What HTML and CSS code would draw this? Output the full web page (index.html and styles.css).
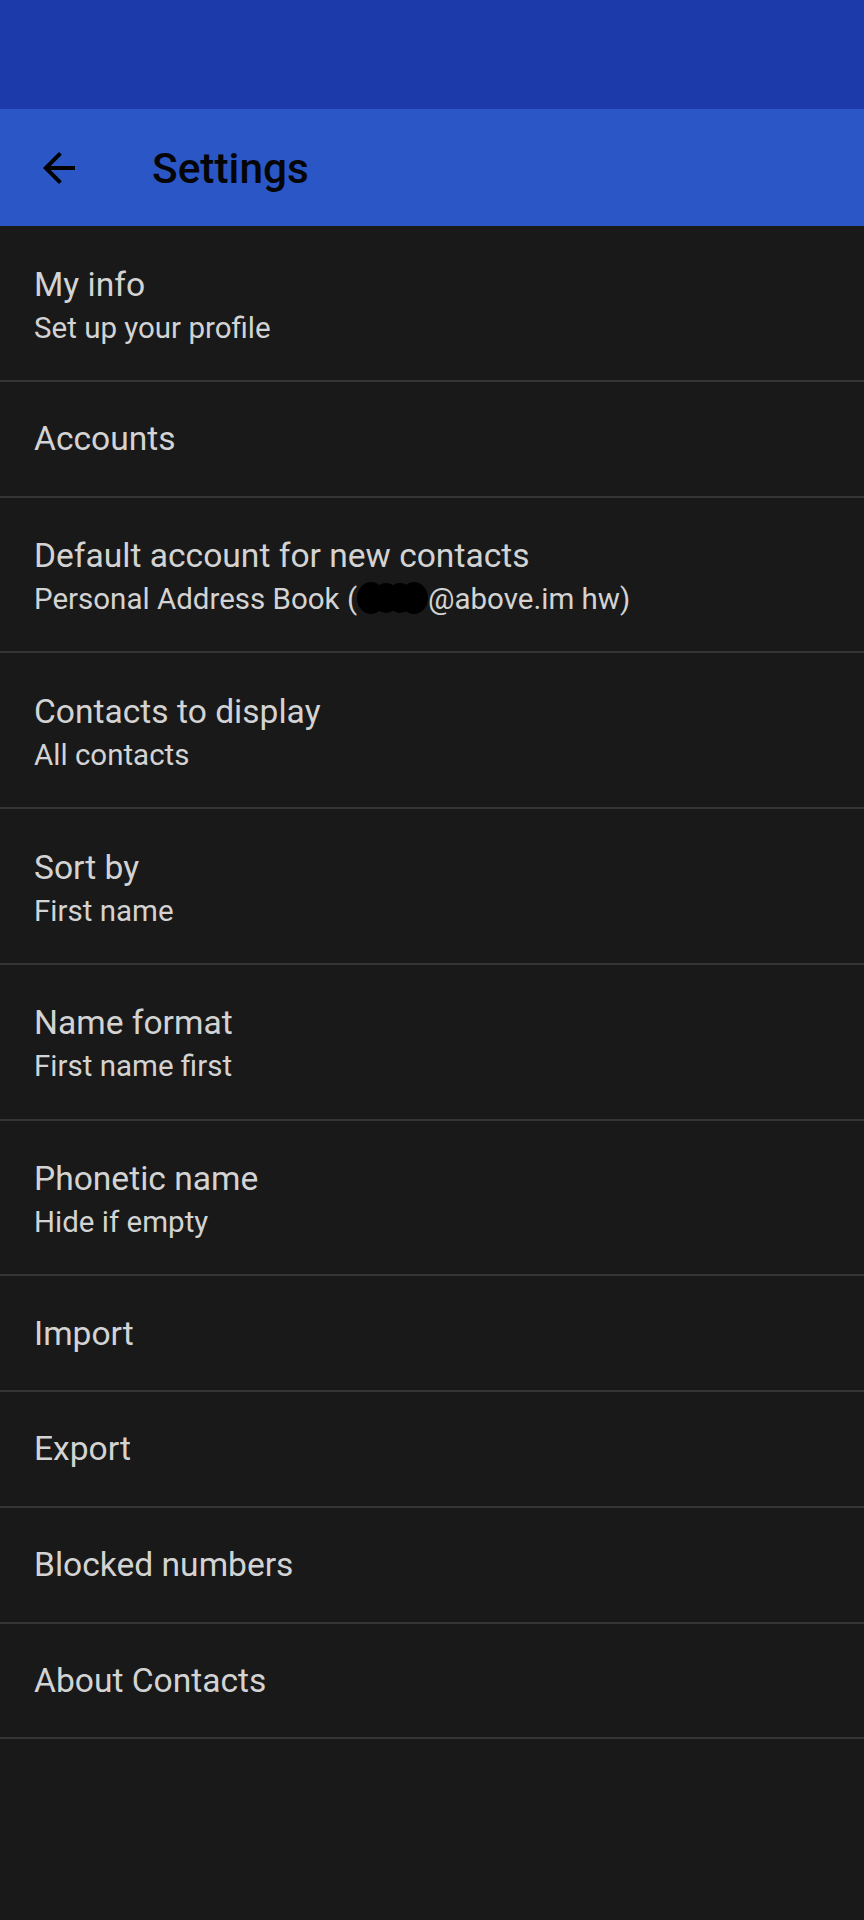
FILE: index.html
```html
<!DOCTYPE html>
<html>
<head>
<meta charset="utf-8">
<link rel="stylesheet" href="styles.css">
</head>
<body>
<div class="status"></div>
<header class="toolbar">
  <svg class="back" viewBox="0 0 24 24" width="48" height="48"><path d="M20 11H7.83l5.59-5.59L12 4l-8 8 8 8 1.41-1.41L7.83 13H20v-2z" fill="#000"/></svg>
  <h1 class="title">Settings</h1>
</header>
<main class="list">
  <div class="row two"><div class="t">My info</div><div class="s">Set up your profile</div></div>
  <div class="row one"><div class="t">Accounts</div></div>
  <div class="row two"><div class="t">Default account for new contacts</div><div class="s">Personal Address Book (<svg class="blob" viewBox="0 0 72 32" width="72" height="32"><ellipse cx="15" cy="16" rx="14" ry="16"/><ellipse cx="30" cy="16" rx="13" ry="15"/><ellipse cx="44" cy="16" rx="13" ry="15"/><ellipse cx="58" cy="16" rx="14" ry="16"/></svg>@above.im hw)</div></div>
  <div class="row two"><div class="t">Contacts to display</div><div class="s">All contacts</div></div>
  <div class="row two"><div class="t">Sort by</div><div class="s">First name</div></div>
  <div class="row two"><div class="t">Name format</div><div class="s">First name first</div></div>
  <div class="row two"><div class="t">Phonetic name</div><div class="s">Hide if empty</div></div>
  <div class="row one"><div class="t">Import</div></div>
  <div class="row one"><div class="t">Export</div></div>
  <div class="row one"><div class="t">Blocked numbers</div></div>
  <div class="row one"><div class="t">About Contacts</div></div>
</main>
</body>
</html>
```
FILE: styles.css
```css
html, body {
  margin: 0;
  padding: 0;
  background: #191919;
  font-family: Roboto, "Noto Sans", sans-serif;
}
.status {
  height: 109px;
  background: #1c3aa9;
}
.toolbar {
  height: 117px;
  background: #2a56c6;
  display: flex;
  align-items: center;
}
.back {
  margin-left: 35px;
  flex: none;
}
.title {
  margin: 3px 0 0 69px;
  font-size: 42.4px;
  font-weight: 500;
  color: #050505;
  line-height: 1;
}
.list {
  display: flex;
  flex-direction: column;
}
.row {
  box-sizing: border-box;
  border-bottom: 2px solid #353535;
  padding: 0 34px;
  display: flex;
  flex-direction: column;
  color: #d3d3d3;
}
.row.two {
  height: 155.75px;
  padding-top: 37.5px;
}
.row.one {
  height: 115.75px;
  justify-content: center;
  padding-top: 1px;
}
.t {
  font-size: 33.6px;
  line-height: 42px;
}
.s {
  font-size: 29.5px;
  line-height: 45px;
}
.blob {
  fill: #000;
  vertical-align: -5px;
  margin-left: -1px;
}
```
